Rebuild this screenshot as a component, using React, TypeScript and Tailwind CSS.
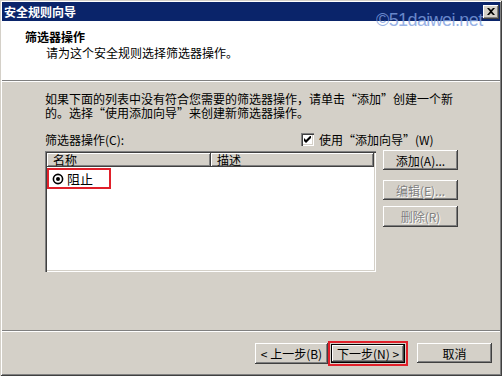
import React from "react";

const raised =
  "shadow-[inset_-1px_-1px_0_#404040,inset_1px_1px_0_#ffffff,inset_-2px_-2px_0_#808080,inset_2px_2px_0_#d4d0c8]";

const Btn: React.FC<{ label: string; disabled?: boolean; className?: string }> = ({
  label,
  disabled,
  className = "",
}) => (
  <div
    className={`flex items-center justify-center bg-[#d4d0c8] ${raised} ${
      disabled ? "text-[#808080] [text-shadow:1px_1px_0_#ffffff]" : "text-black"
    } ${className}`}
  >
    {label}
  </div>
);

const App: React.FC = () => {
  return (
    <div
      className="relative w-[502px] h-[376px] bg-[#d4d0c8] p-[2px] flex flex-col text-[12px] leading-[13px] text-black shadow-[inset_1px_1px_0_#d4d0c8,inset_-1px_-1px_0_#404040,inset_2px_2px_0_#ffffff,inset_-2px_-2px_0_#808080]"
      style={{ fontFamily: '"Noto Sans CJK SC", "Liberation Sans", sans-serif' }}
    >
      {/* title bar */}
      <div className="h-[19px] bg-[#0a246a] flex items-center justify-between pl-[2px] pr-[1px]">
        <span className="text-white font-bold text-[12px]">安全规则向导</span>
        <div
          className={`relative z-10 w-[16px] h-[14px] bg-[#d4d0c8] ${raised} flex items-center justify-center`}
        >
          <svg width="8" height="7" viewBox="0 0 8 7">
            <path d="M0 0h2l2 2 2-2h2L5 3.5 8 7H6L4 5 2 7H0l3-3.5z" fill="#000" />
          </svg>
        </div>
      </div>

      {/* header */}
      <div className="h-[60px] bg-white pl-[23px] pt-[9px] border-b border-[#808080]">
        <div className="font-bold leading-[14px]">筛选器操作</div>
        <div className="pl-[21px] mt-[2px] leading-[14px]">请为这个安全规则选择筛选器操作。</div>
      </div>
      <div className="h-px bg-white" />

      {/* body */}
      <div className="flex-1 pl-[43px] pt-[10px]">
        <p className="leading-[14px] whitespace-nowrap">
          如果下面的列表中没有符合您需要的筛选器操作，请单击“添加”创建一个新
          <br />
          的。选择“使用添加向导”来创建新筛选器操作。
        </p>

        <div className="mt-[12px] flex items-center h-[14px]">
          <span className="w-[256px]">筛选器操作(C):</span>
          <div className="flex items-center gap-[5px]">
            <div className="w-[13px] h-[13px] bg-white shadow-[inset_1px_1px_0_#808080,inset_2px_2px_0_#404040,inset_-1px_-1px_0_#ffffff,inset_-2px_-2px_0_#d4d0c8] flex items-center justify-center">
              <svg width="7" height="7" viewBox="0 0 7 7">
                <path d="M0 2v3l2 2 5-5V-1L2 4z" fill="#000" />
              </svg>
            </div>
            <span>使用“添加向导”(W)</span>
          </div>
        </div>

        <div className="mt-[4px] flex">
          {/* list view */}
          <div className="w-[331px] h-[121px] mt-[1px] bg-white p-[2px] shadow-[inset_1px_1px_0_#808080,inset_2px_2px_0_#404040,inset_-1px_-1px_0_#ffffff,inset_-2px_-2px_0_#d4d0c8]">
            <div className="flex h-[14px]">
              <div className={`w-[164px] bg-[#d4d0c8] ${raised} pl-[6px] leading-[14px]`}>名称</div>
              <div className={`flex-1 bg-[#d4d0c8] ${raised} pl-[6px] leading-[14px]`}>描述</div>
            </div>
            <div className="mt-[1px] w-[64px] h-[21px] border-2 border-[#e0202a] flex items-center pl-[3px] gap-[3px]">
              <svg width="12" height="12" viewBox="0 0 12 12">
                <circle cx="6" cy="6" r="4.6" fill="none" stroke="#000" strokeWidth="1.6" />
                <circle cx="6" cy="6" r="2" fill="#000" />
              </svg>
              <span className="text-[13px]">阻止</span>
            </div>
          </div>

          {/* side buttons */}
          <div className="ml-[7px] flex flex-col">
            <Btn label="添加(A)..." className="w-[75px] h-[20px]" />
            <Btn label="编辑(E)..." disabled className="w-[75px] h-[20px] mt-[10px]" />
            <Btn label="删除(R)" disabled className="w-[75px] h-[21px] mt-[6px]" />
          </div>
        </div>
      </div>

      {/* bottom separator */}
      <div className="h-px bg-[#808080]" />
      <div className="h-px bg-white" />

      {/* bottom buttons */}
      <div className="h-[42px] flex items-start pt-[11px] pl-[253px]">
        <Btn label="< 上一步(B)" className="w-[73px] h-[21px]" />
        <div className="border-2 border-[#e0202a] p-px -mt-[2px]">
          <div className="border border-black">
            <Btn label="下一步(N) >" className="w-[72px] h-[17px]" />
          </div>
        </div>
        <Btn label="取消" className="ml-[9px] w-[75px] h-[20px]" />
      </div>

      {/* watermark */}
      <div
        className="absolute left-[376px] top-[10px] text-[18px] leading-[20px] tracking-[-0.6px] text-[#7f9fe0] opacity-80 pointer-events-none"
        style={{ fontFamily: '"Liberation Sans", sans-serif' }}
      >
        ©51daiwei.net
      </div>
    </div>
  );
};

export default App;
